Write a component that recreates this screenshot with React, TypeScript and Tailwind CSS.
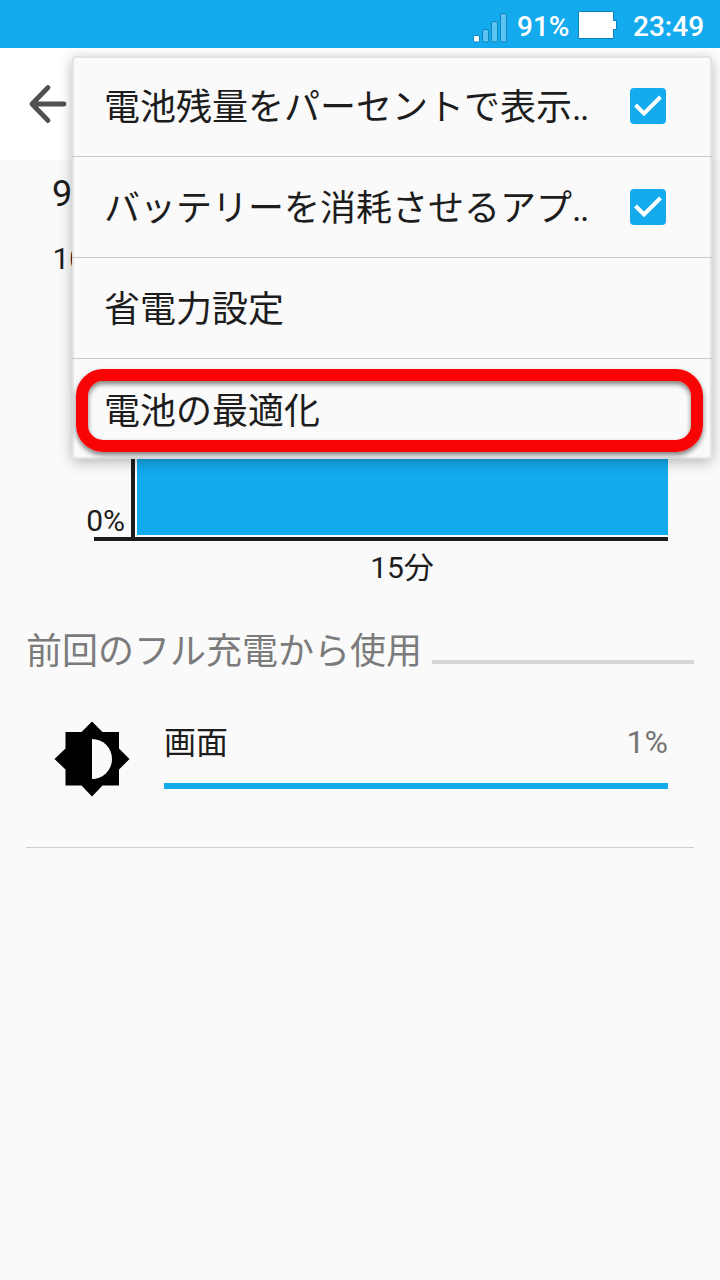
function StatusBar() {
  return (
    <header className="flex h-12 items-center bg-[#14abee] text-[28px] leading-none font-medium text-white">
      <svg className="ml-[472px] mt-[7px] h-[33px] w-[36px] shrink-0" viewBox="0 0 36 33" fill="#5bc4f2" stroke="#0d84bb">
        <rect x="1.5" y="24.5" width="6" height="6.5" rx="1.5" fill="#fff" />
        <rect x="10.500" y="18.500" width="6" height="12.500" rx="1.500" />
        <rect x="19.500" y="10.500" width="6" height="20.500" rx="1.500" />
        <rect x="28.500" y="2.500" width="6" height="28.500" rx="1.500" />
      </svg>
      <span className="ml-[9px] mt-[5px] w-[61px] shrink-0">91%</span>
      <svg className="mt-[2px] h-[30px] w-[40px] shrink-0" viewBox="0 0 40 30" fill="#fff" stroke="#0d84bb">
        <path d="M.5 1.500H35.500V10.500H38.500V19.500H35.500V28.500H.5Z" />
      </svg>
      <span className="ml-[15px] mt-[5px]">23:49</span>
    </header>
  );
}

function Checkbox() {
  return (
    <span className="flex size-9 items-center justify-center rounded-[4px] bg-[#14abee]">
      <svg viewBox="0 0 36 36" className="size-9" fill="none" stroke="#fff" strokeWidth="4">
        <path d="M5.500 17 14 25.500 30.500 9" />
      </svg>
    </span>
  );
}

type MenuItem = { label: string; truncated?: boolean; checked?: boolean };

const menuItems: MenuItem[] = [
  { label: "電池残量をパーセントで表示", truncated: true, checked: true },
  { label: "バッテリーを消耗させるアプ", truncated: true, checked: true },
  { label: "省電力設定" },
  { label: "電池の最適化" },
];

function OverflowMenu() {
  return (
    <div className="absolute top-[56px] left-[72px] h-[403px] w-[640px] rounded-[4px] bg-[#fafafa] shadow-[0_3px_14px_rgba(0,0,0,0.28),inset_0_0_0_2px_#e3e3e3]">
      <ul>
        {menuItems.map((item) => (
          <li
            key={item.label}
            className="flex h-[101px] items-center justify-between border-b border-[#c9c9c9] pr-[46px] pl-[32px] text-[36px] leading-[52px] text-[#1d1d1d] last:border-b-0"
          >
            <span className="pt-[4px] whitespace-nowrap">
              {item.label}
              {item.truncated && <span className="tracking-[-1.500px]">..</span>}
            </span>
            {item.checked && <Checkbox />}
          </li>
        ))}
      </ul>
      <div className="absolute top-[313px] left-[4px] h-[83px] w-[627px] rounded-[27px] border-[12px] border-[#f90404] shadow-[0_3px_5px_rgba(0,0,0,0.5),inset_0_3px_5px_rgba(0,0,0,0.5)]" />
    </div>
  );
}

export default function App() {
  return (
    <div className="relative flex h-[1280px] w-[720px] flex-col overflow-hidden bg-[#fafafa] font-['Roboto','Noto_Sans_CJK_JP',sans-serif] text-[#1d1d1d]">
      <StatusBar />
      <div className="flex h-[112px] items-center bg-white pl-[28px]">
        <svg className="size-10" viewBox="0 0 40 40" fill="none" stroke="#505050" strokeWidth="4.800" strokeLinecap="round" strokeLinejoin="round">
          <path d="M36 20H4M20 3.500 4 20 20 36.500" />
        </svg>
      </div>

      <main className="flex flex-col">
        <section className="flex h-[461px] flex-col pl-[52px]">
          <div className="mt-[13px] h-[42px] text-[36px] leading-[42px]">9</div>
          <div className="mt-[25px] flex h-[297px]">
            <div className="flex w-[73px] flex-col justify-between text-right text-[30px] leading-[36px]">
              <span className="mt-[1px]">100%</span>
              <span className="mb-[-2px]">0%</span>
            </div>
            <div className="ml-[6px] w-[4px] bg-[#1d1d1d]" />
            <div className="ml-[2px] h-[295px] w-[531px] bg-[#14abee]" />
          </div>
          <div className="ml-[42px] h-[4px] w-[574px] shrink-0 bg-[#1d1d1d]" />
          <div className="mt-[6px] ml-[79px] w-[542px] text-center text-[30px] leading-[42px]">15分</div>
        </section>

        <section className="mx-[26px] flex flex-col">
          <div className="flex h-[60px]">
            <h2 className="w-[406px] pt-[1px] text-[36px] leading-[60px] whitespace-nowrap text-[#7b7b7b]">前回のフル充電から使用</h2>
            <div className="mt-[39px] h-[4px] flex-1 bg-[#d6d6d6]" />
          </div>
          <div className="flex h-[167px] border-b border-[#cfcfcf] pr-[26px] pl-[28px]">
            <svg className="mt-[39px] h-[78px] w-[76px] shrink-0" viewBox="0 0 76 78">
              <path d="M38 1.500 48.500 12H65V28.500L75.500 39 65 49.500V65.500H48.500L38 76.500 27.500 65.500H11.500V49.500L.5 39 11.500 28.500V12H27.500Z" />
              <path fill="#fafafa" d="M38 19A20 20 0 0 1 38 59Z" />
            </svg>
            <div className="ml-[34px] flex-1 pt-[39px]">
              <div className="flex h-[44px] items-center justify-between text-[32px] leading-[44px]">
                <span className="pt-[2px]">画面</span>
                <span className="text-[#757575]">1%</span>
              </div>
              <div className="mt-[19px] h-[6px] bg-[#14abee]" />
            </div>
          </div>
        </section>
      </main>

      <OverflowMenu />
    </div>
  );
}
